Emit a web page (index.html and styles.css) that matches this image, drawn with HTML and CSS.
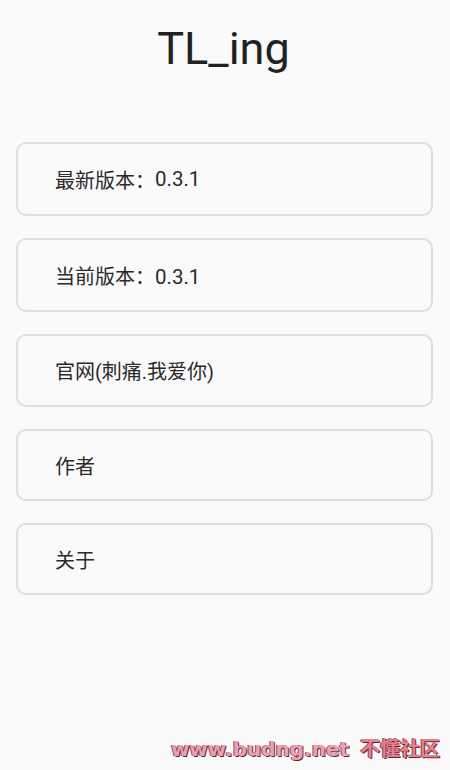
FILE: index.html
```html
<!DOCTYPE html>
<html lang="zh">
<head>
<meta charset="utf-8">
<link rel="stylesheet" href="styles.css">
</head>
<body>
<div class="page">
  <h1 class="title">TL_ing</h1>
  <div class="list">
    <div class="card card-tall">最新版本：<span class="num">0.3.1</span></div>
    <div class="card card-tall">当前版本：<span class="num num-low">0.3.1</span></div>
    <div class="card card-mid">官网(刺痛.我爱你)</div>
    <div class="card">作者</div>
    <div class="card">关于</div>
  </div>
  <div class="watermark"><span class="wm-url">www.budng.net</span> <span class="wm-cn">不懂社区</span></div>
</div>
</body>
</html>
```
FILE: styles.css
```css
html, body {
  margin: 0;
  padding: 0;
  background: #fafafa;
}
.page {
  position: relative;
  width: 450px;
  height: 770px;
  font-family: Roboto, "Noto Sans CJK SC", sans-serif;
  color: #222;
}
.title {
  margin: 0;
  padding-top: 22px;
  padding-right: 3px;
  text-align: center;
  font-weight: 400;
  font-size: 45px;
  line-height: 54px;
  color: #212121;
}
.list {
  display: flex;
  flex-direction: column;
  gap: 22px;
  padding: 66px 17px 0 16px;
}
.card {
  height: 68px;
  border: 2px solid #dedede;
  border-radius: 10px;
  display: flex;
  align-items: center;
  padding-left: 37px;
  font-size: 20px;
  color: #2a2a2a;
}
.card-tall {
  height: 70px;
}
.card-mid {
  height: 69px;
}
.num {
  font-size: 20.5px;
}
.num-low {
  position: relative;
  top: 2px;
}
.watermark {
  position: absolute;
  right: 10px;
  bottom: 10px;
  font-family: "DejaVu Sans", "Noto Sans CJK SC", sans-serif;
  font-weight: 700;
  font-size: 20px;
  line-height: 22px;
  color: #eda0b2;
  text-shadow: 1px 1px 0 #5a2a34, -1px 0 0 #8a4a58;
}
.wm-cn {
  color: #ec7d8c;
  margin-left: 4px;
}
```
